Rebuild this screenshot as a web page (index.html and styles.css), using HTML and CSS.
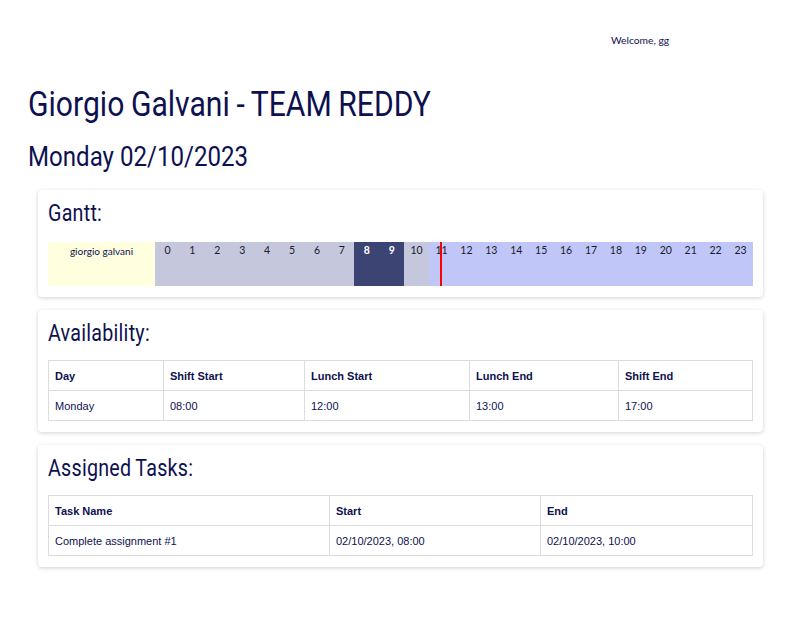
FILE: index.html
```html
<!DOCTYPE html>
<html>
<head>
<meta charset="utf-8">
<link rel="stylesheet" href="styles.css">
</head>
<body>
<header class="topbar"><span class="welcome">Welcome, gg</span></header>
<main class="page">
  <h1 class="title"><span class="cond">Giorgio Galvani - TEAM REDDY</span></h1>
  <h2 class="date"><span class="cond">Monday 02/10/2023</span></h2>

  <section class="card">
    <h3 class="card-title"><span class="cond">Gantt:</span></h3>
    <div class="gantt">
      <div class="gantt-label">giorgio galvani</div>
      <div class="gantt-hours">
        <div class="hour past">0</div>
        <div class="hour past">1</div>
        <div class="hour past">2</div>
        <div class="hour past">3</div>
        <div class="hour past">4</div>
        <div class="hour past">5</div>
        <div class="hour past">6</div>
        <div class="hour past">7</div>
        <div class="hour task">8</div>
        <div class="hour task">9</div>
        <div class="hour past">10</div>
        <div class="hour future">11<span class="now-line" style="left: 11px"></span></div>
        <div class="hour future">12</div>
        <div class="hour future">13</div>
        <div class="hour future">14</div>
        <div class="hour future">15</div>
        <div class="hour future">16</div>
        <div class="hour future">17</div>
        <div class="hour future">18</div>
        <div class="hour future">19</div>
        <div class="hour future">20</div>
        <div class="hour future">21</div>
        <div class="hour future">22</div>
        <div class="hour future">23</div>
      </div>
    </div>
  </section>

  <section class="card">
    <h3 class="card-title"><span class="cond">Availability:</span></h3>
    <table class="data">
      <colgroup>
        <col style="width:115px"><col style="width:141px"><col style="width:165px"><col style="width:149px"><col>
      </colgroup>
      <thead>
        <tr><th>Day</th><th>Shift Start</th><th>Lunch Start</th><th>Lunch End</th><th>Shift End</th></tr>
      </thead>
      <tbody>
        <tr><td>Monday</td><td>08:00</td><td>12:00</td><td>13:00</td><td>17:00</td></tr>
      </tbody>
    </table>
  </section>

  <section class="card">
    <h3 class="card-title"><span class="cond">Assigned Tasks:</span></h3>
    <table class="data">
      <colgroup>
        <col style="width:281px"><col style="width:211px"><col>
      </colgroup>
      <thead>
        <tr><th>Task Name</th><th>Start</th><th>End</th></tr>
      </thead>
      <tbody>
        <tr><td>Complete assignment #1</td><td>02/10/2023, 08:00</td><td>02/10/2023, 10:00</td></tr>
      </tbody>
    </table>
  </section>
</main>
</body>
</html>
```
FILE: styles.css
```css
* { box-sizing: border-box; }
body {
  margin: 0;
  background: #fff;
  color: #0d1150;
  font-family: "Liberation Sans", Arial, sans-serif;
}
.topbar {
  height: 68px;
  padding: 30px 0 0 611px;
}
.welcome {
  font-family: Lato, "Open Sans", sans-serif;
  font-size: 10.3px;
  color: #0d1150;
}
.page {
  padding: 0 24px 0 28px;
}
.cond {
  display: inline-block;
  transform: scaleX(0.86);
  transform-origin: left center;
  white-space: nowrap;
}
.title {
  margin: 17px 0 17px;
  font-family: Roboto, sans-serif;
  font-weight: 400;
  font-size: 35px;
  line-height: 40px;
  word-spacing: -1px;
}
.date {
  margin: 0 0 18px;
  font-family: Roboto, sans-serif;
  font-weight: 400;
  font-size: 28px;
  line-height: 30px;
}
.card {
  margin: 0 0 13px 10px;
  background: #fff;
  border-radius: 4px;
  box-shadow: 0 1px 4px rgba(0,0,0,0.18);
  padding: 10px 10px 11px;
}
.card-title {
  margin: 0 0 12px;
  font-family: Roboto, sans-serif;
  font-weight: 400;
  font-size: 23px;
  line-height: 28px;
  letter-spacing: 0.3px;
  word-spacing: -1px;
}
.card-title .cond { transform: scaleX(0.855); }
.gantt {
  display: flex;
  height: 44px;
  margin-top: 14px;
}
.gantt-label {
  width: 107px;
  flex: none;
  background: #ffffe0;
  text-align: center;
  font-family: Lato, sans-serif;
  font-size: 10px;
  padding-top: 3px;
  color: #0d1150;
}
.gantt-hours {
  flex: 1;
  display: grid;
  grid-template-columns: repeat(24, 1fr);
}
.hour {
  position: relative;
  text-align: center;
  font-family: Lato, sans-serif;
  font-size: 10.5px;
  padding-top: 2px;
  color: #1a1a2e;
}
.past { background: #c5c7dc; }
.task { background: #3c4473; color: #fff; font-weight: 700; }
.future { background: #c0c6f8; }
.now-line {
  position: absolute;
  top: 0;
  bottom: 0;
  width: 2px;
  background: #ff0000;
}
.data {
  width: 100%;
  border-collapse: collapse;
  table-layout: fixed;
  font-size: 11px;
  color: #0d1150;
}
.data th, .data td {
  border: 1px solid #dcdcdc;
  height: 30px;
  padding: 0 6px;
  text-align: left;
}
.data th { font-weight: 700; }
```
